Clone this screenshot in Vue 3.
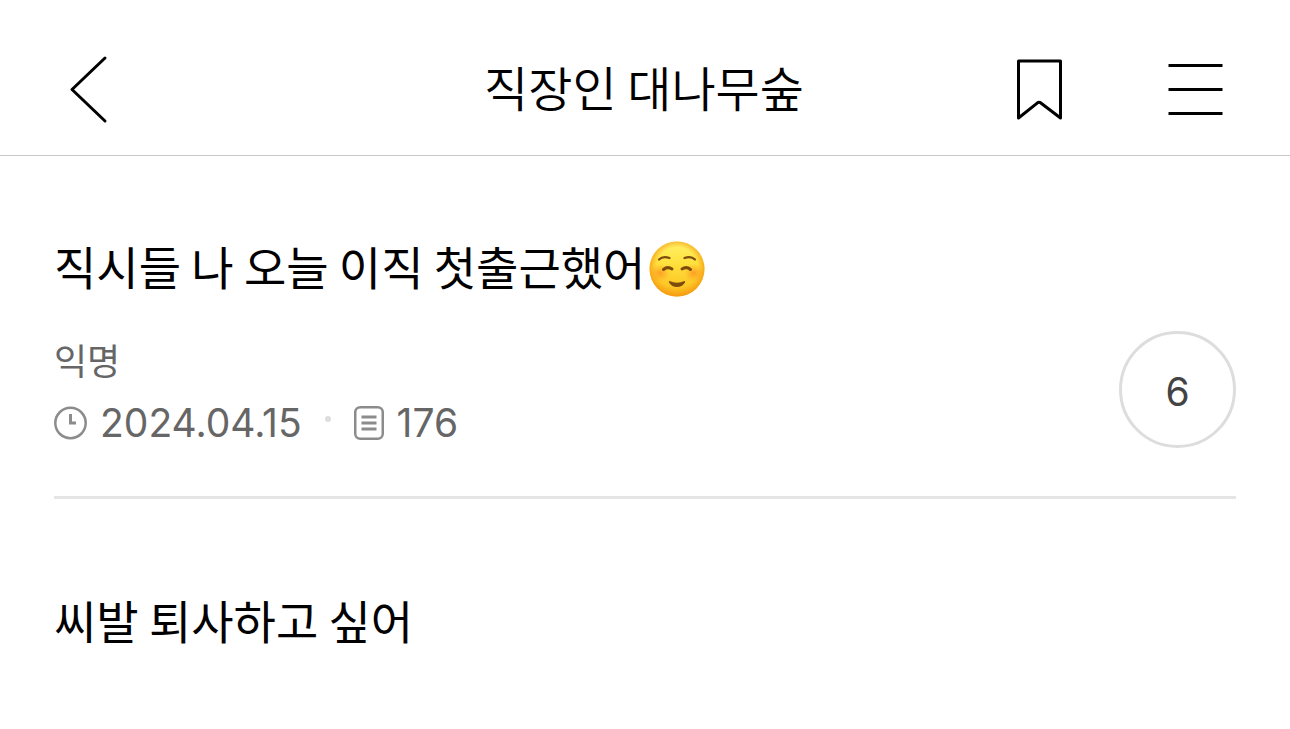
<script setup>
const post = {
  board: '직장인 대나무숲',
  title: '직시들 나 오늘 이직 첫출근했어',
  author: '익명',
  date: '2024.04.15',
  views: 176,
  comments: 6,
  body: '씨발 퇴사하고 싶어',
}
</script>

<template>
  <div class="page">
    <header class="topbar">
      <button class="icon-button back" type="button" aria-label="뒤로">
        <svg width="40" height="70" viewBox="0 0 40 70" fill="none">
          <path d="M36 3 3 34.500 36 66" stroke="#000" stroke-width="3" stroke-linecap="round" stroke-linejoin="round" />
        </svg>
      </button>
      <h1 class="board">{{ post.board }}</h1>
      <div class="actions">
        <button class="icon-button" type="button" aria-label="북마크">
          <svg width="48" height="64" viewBox="0 0 48 64" fill="none">
            <path d="M3.500 3H45.500V60L25.500 44.800Q24 43.700 22.500 44.800L3.500 60Z" stroke="#000" stroke-width="3" stroke-linejoin="round" />
          </svg>
        </button>
        <button class="icon-button" type="button" aria-label="메뉴">
          <svg width="56" height="54" viewBox="0 0 56 54" fill="none">
            <path d="M1.500 2.500H55.500M1.500 26.500H55.500M1.500 50.500H55.500" stroke="#000" stroke-width="3" />
          </svg>
        </button>
      </div>
    </header>

    <main class="post">
      <div class="heading">
        <h2 class="title">{{ post.title }}</h2>
        <svg class="emoji" width="56" height="56" viewBox="0 0 56 56" role="img" aria-label="미소">
          <defs>
            <linearGradient id="face" x1="0" y1="0" x2="0" y2="1">
              <stop offset="0" stop-color="#fff36a" />
              <stop offset="0.4" stop-color="#ffe03c" />
              <stop offset="0.8" stop-color="#fdc726" />
              <stop offset="1" stop-color="#fbb01c" />
            </linearGradient>
            <radialGradient id="edge" cx="0.5" cy="0.48" r="0.53">
              <stop offset="0.7" stop-color="#f8a010" stop-opacity="0" />
              <stop offset="1" stop-color="#f29612" stop-opacity="0.9" />
            </radialGradient>
            <radialGradient id="blush">
              <stop offset="0" stop-color="#ff7a1c" stop-opacity="0.6" />
              <stop offset="1" stop-color="#ff8a20" stop-opacity="0" />
            </radialGradient>
          </defs>
          <circle cx="28" cy="28" r="27.500" fill="url(#face)" />
          <circle cx="28" cy="28" r="27.500" fill="url(#edge)" />
          <ellipse cx="11" cy="32" rx="10" ry="9" fill="url(#blush)" />
          <ellipse cx="45" cy="32" rx="10" ry="9" fill="url(#blush)" />
          <g fill="none" stroke="#7d4c0c" stroke-linecap="round">
            <path d="M10 18.500Q14 14.500 20.500 17M35.500 17Q42 14.500 46 18.500" stroke-width="2.200" />
            <path d="M14.500 28.500Q18.500 25 23 28M33 28Q37.500 25 41.500 28.500" stroke-width="3" />
          </g>
          <path d="M20.500 40Q28 43.500 35.500 40Q36.500 40 36 41.500Q33 46 28 46Q23 46 20 41.500Q19.500 40 20.500 40Z" fill="#7d4c0c" />
        </svg>
      </div>

      <div class="info">
        <div class="byline">
          <span class="author">{{ post.author }}</span>
          <div class="meta">
            <svg width="33" height="34" viewBox="0 0 33 34" fill="none">
              <circle cx="16.500" cy="17" r="15.200" stroke="#8c8c8c" stroke-width="2.500" />
              <path d="M16.500 8V17H22" stroke="#8c8c8c" stroke-width="3" />
            </svg>
            <time class="date" datetime="2024-04-15">{{ post.date }}</time>
            <span class="dot"></span>
            <svg width="30" height="34" viewBox="0 0 30 34" fill="none">
              <rect x="1.250" y="1.250" width="27.500" height="31.500" rx="5" stroke="#8c8c8c" stroke-width="2.500" />
              <path d="M7.500 11H22.500M7.500 17H22.500M7.500 23H22.500" stroke="#8c8c8c" stroke-width="2.800" />
            </svg>
            <span class="views">{{ post.views }}</span>
          </div>
        </div>
        <button class="count" type="button" aria-label="댓글 6개">{{ post.comments }}</button>
      </div>

      <p class="body">{{ post.body }}</p>
    </main>
  </div>
</template>

<style>
body {
  margin: 0;
  background: #fff;
}
</style>

<style scoped>
.page {
  color: #000;
  font-family: Inter, "Noto Sans CJK KR", sans-serif;
}

.topbar {
  display: grid;
  grid-template-columns: 1fr auto 1fr;
  align-items: center;
  padding: 53px 67px 28px 69px;
  border-bottom: 1px solid #c8c8c8;
}

.icon-button {
  display: flex;
  padding: 0;
  border: 0;
  background: none;
}

.board,
.title,
.body {
  margin: 0;
  font-family: "Noto Sans CJK KR", sans-serif;
  font-weight: 400;
}

.board {
  padding: 0 4px 8px 0;
  font-size: 48px;
  line-height: 66px;
  font-weight: 350;
}

.actions {
  display: flex;
  justify-content: flex-end;
  align-items: center;
  gap: 104px;
}

.post {
  padding: 76px 54px;
}

.heading {
  display: flex;
  align-items: center;
  gap: 4px;
}

.title,
.body {
  font-size: 46px;
  line-height: 66px;
}

.title {
  padding-bottom: 8px;
}

.emoji {
  flex: none;
}

.info {
  display: flex;
  justify-content: space-between;
  align-items: flex-start;
  margin-top: 25px;
  padding-bottom: 46px;
  border-bottom: 3px solid #e5e5e5;
}

.byline {
  display: flex;
  flex-direction: column;
  gap: 10px;
  padding-top: 1px;
  color: #666;
}

.author {
  font-family: "Noto Sans CJK KR", sans-serif;
  font-size: 36px;
  line-height: 54px;
}

.meta {
  display: flex;
  align-items: center;
  font-size: 39px;
  line-height: 54px;
}

.date {
  margin-left: 13px;
}

.views {
  margin-left: 13px;
}

.dot {
  width: 6px;
  height: 6px;
  margin: 0 23px 8px 23px;
  border-radius: 50%;
  background: #ddd;
}

.count {
  width: 117px;
  height: 117px;
  padding: 4px 0 0;
  box-sizing: border-box;
  border: 3px solid #ddd;
  border-radius: 50%;
  background: #fff;
  color: #444;
  font-family: inherit;
  font-size: 39px;
}

.body {
  margin-top: 87px;
}
</style>
